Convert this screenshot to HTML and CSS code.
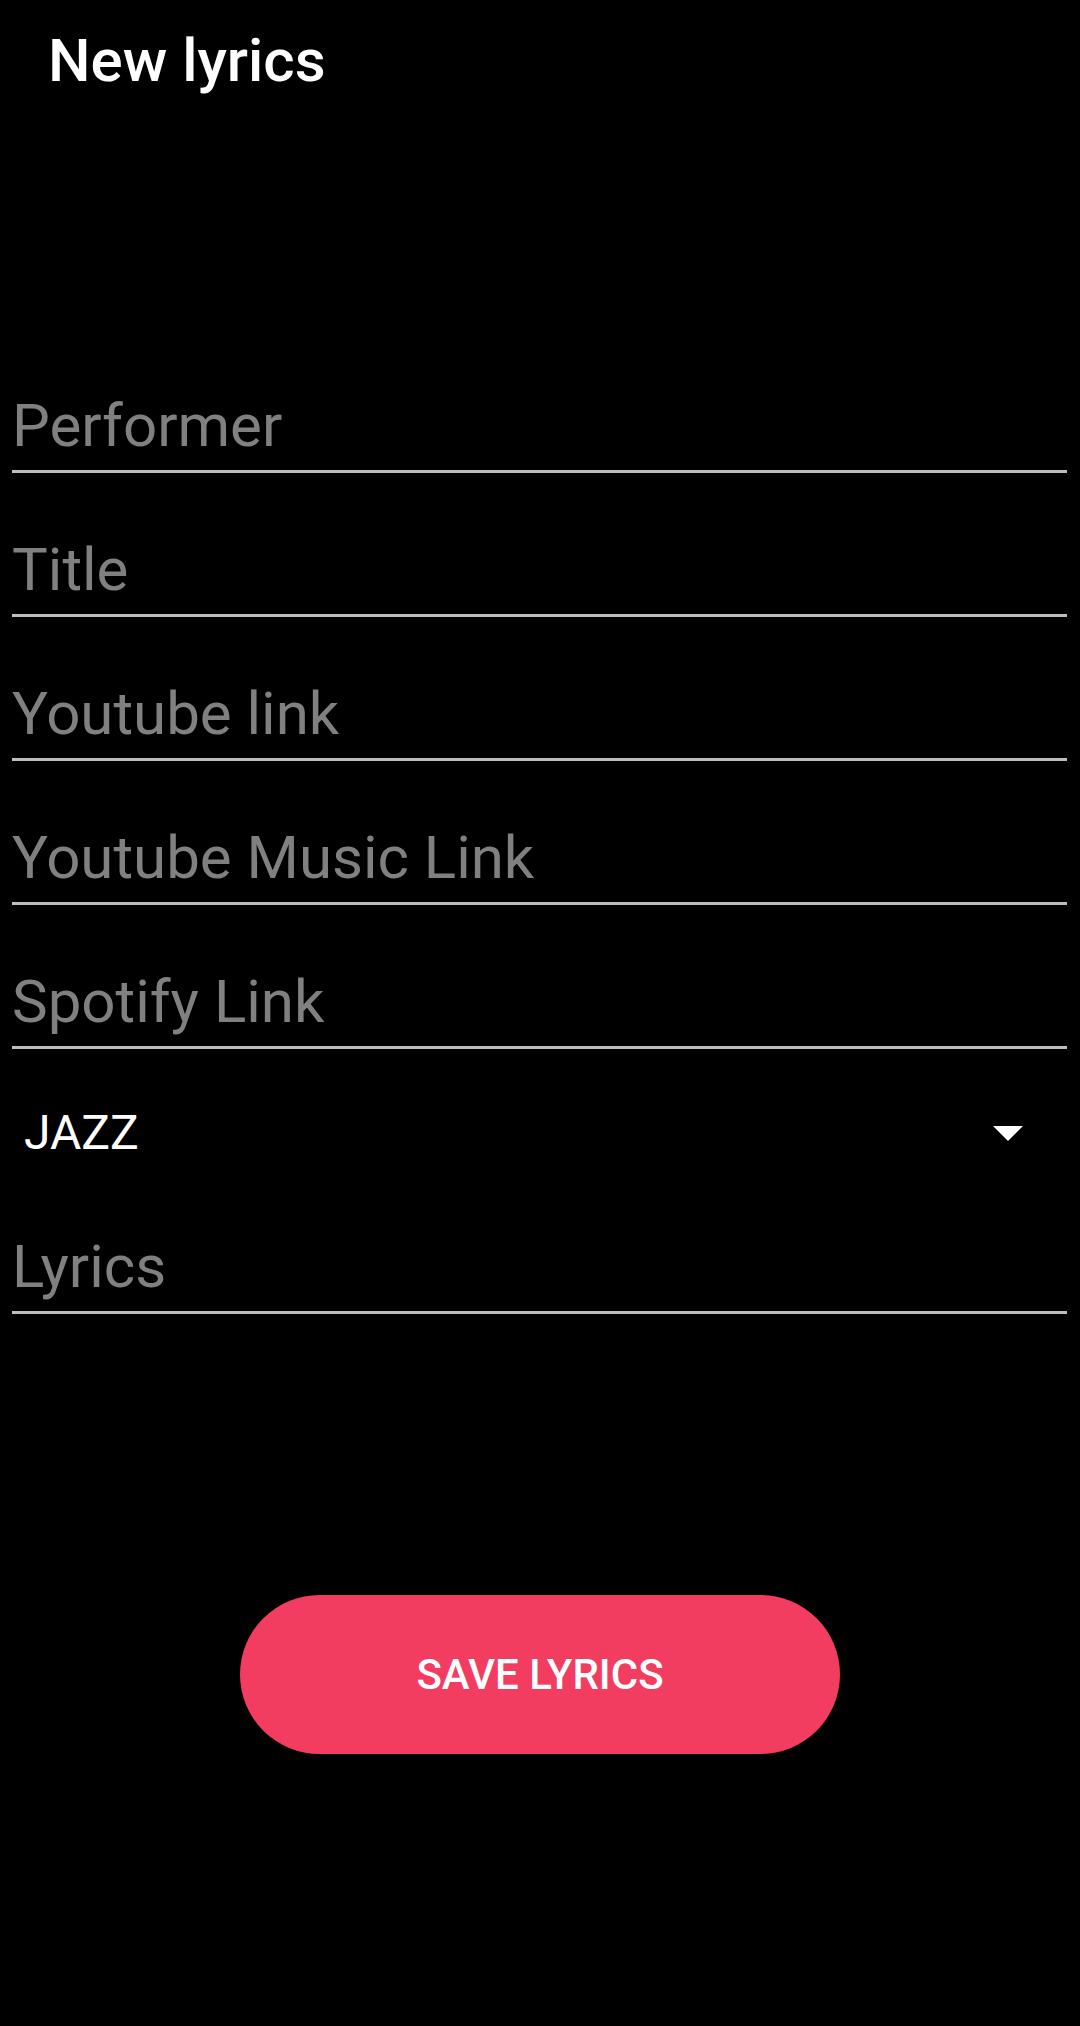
FILE: index.html
```html
<!DOCTYPE html>
<html>
<head>
<meta charset="utf-8">
<link rel="stylesheet" href="styles.css">
</head>
<body>
<div class="screen">
  <header class="toolbar">
    <h1 class="toolbar-title">New lyrics</h1>
  </header>
  <form class="form">
    <div class="field"><span class="hint">Performer</span></div>
    <div class="field"><span class="hint">Title</span></div>
    <div class="field"><span class="hint">Youtube link</span></div>
    <div class="field"><span class="hint">Youtube Music Link</span></div>
    <div class="field"><span class="hint">Spotify Link</span></div>
    <div class="spinner">
      <span class="spinner-value">JAZZ</span>
      <span class="spinner-arrow"></span>
    </div>
    <div class="field field-lyrics"><span class="hint">Lyrics</span></div>
    <div class="actions">
      <button type="button" class="save-btn">SAVE LYRICS</button>
    </div>
  </form>
</div>
</body>
</html>
```
FILE: styles.css
```css
html, body {
  margin: 0;
  padding: 0;
  background: #000;
}
body {
  font-family: Roboto, "Noto Sans", "Liberation Sans", sans-serif;
  color: #fff;
  width: 1080px;
  height: 2026px;
  overflow: hidden;
}
.screen {
  display: flex;
  flex-direction: column;
}
.toolbar {
  padding: 27px 0 0 48px;
  height: 68px;
}
.toolbar-title {
  margin: 0;
  font-size: 60px;
  line-height: 68px;
  font-weight: 500;
  color: #fff;
}
.form {
  display: flex;
  flex-direction: column;
  padding: 296px 13px 0 12px;
}
.field {
  padding: 0 0 9px 0;
  border-bottom: 3px solid #bdbdbd;
  margin-bottom: 62px;
  line-height: 70px;
  height: 70px;
}
.hint {
  font-size: 60px;
  color: #808080;
}
.spinner {
  display: flex;
  align-items: center;
  justify-content: space-between;
  margin-top: -6px;
  margin-bottom: 71px;
  padding: 0 44px 0 12px;
  height: 56px;
  line-height: 56px;
}
.spinner-value {
  font-size: 48px;
  color: #fff;
}
.spinner-arrow {
  width: 0;
  height: 0;
  border-left: 15px solid transparent;
  border-right: 15px solid transparent;
  border-top: 15px solid #fff;
}
.field-lyrics {
  margin-bottom: 0;
}
.actions {
  display: flex;
  justify-content: center;
  padding-top: 281px;
}
.save-btn {
  width: 600px;
  height: 159px;
  border: none;
  border-radius: 80px;
  background: #f23c60;
  color: #fff;
  font-family: Roboto, "Noto Sans", "Liberation Sans", sans-serif;
  font-size: 42px;
  font-weight: 500;
  margin-left: -12px;
  margin-right: -13px;
  padding: 0;
}
```
